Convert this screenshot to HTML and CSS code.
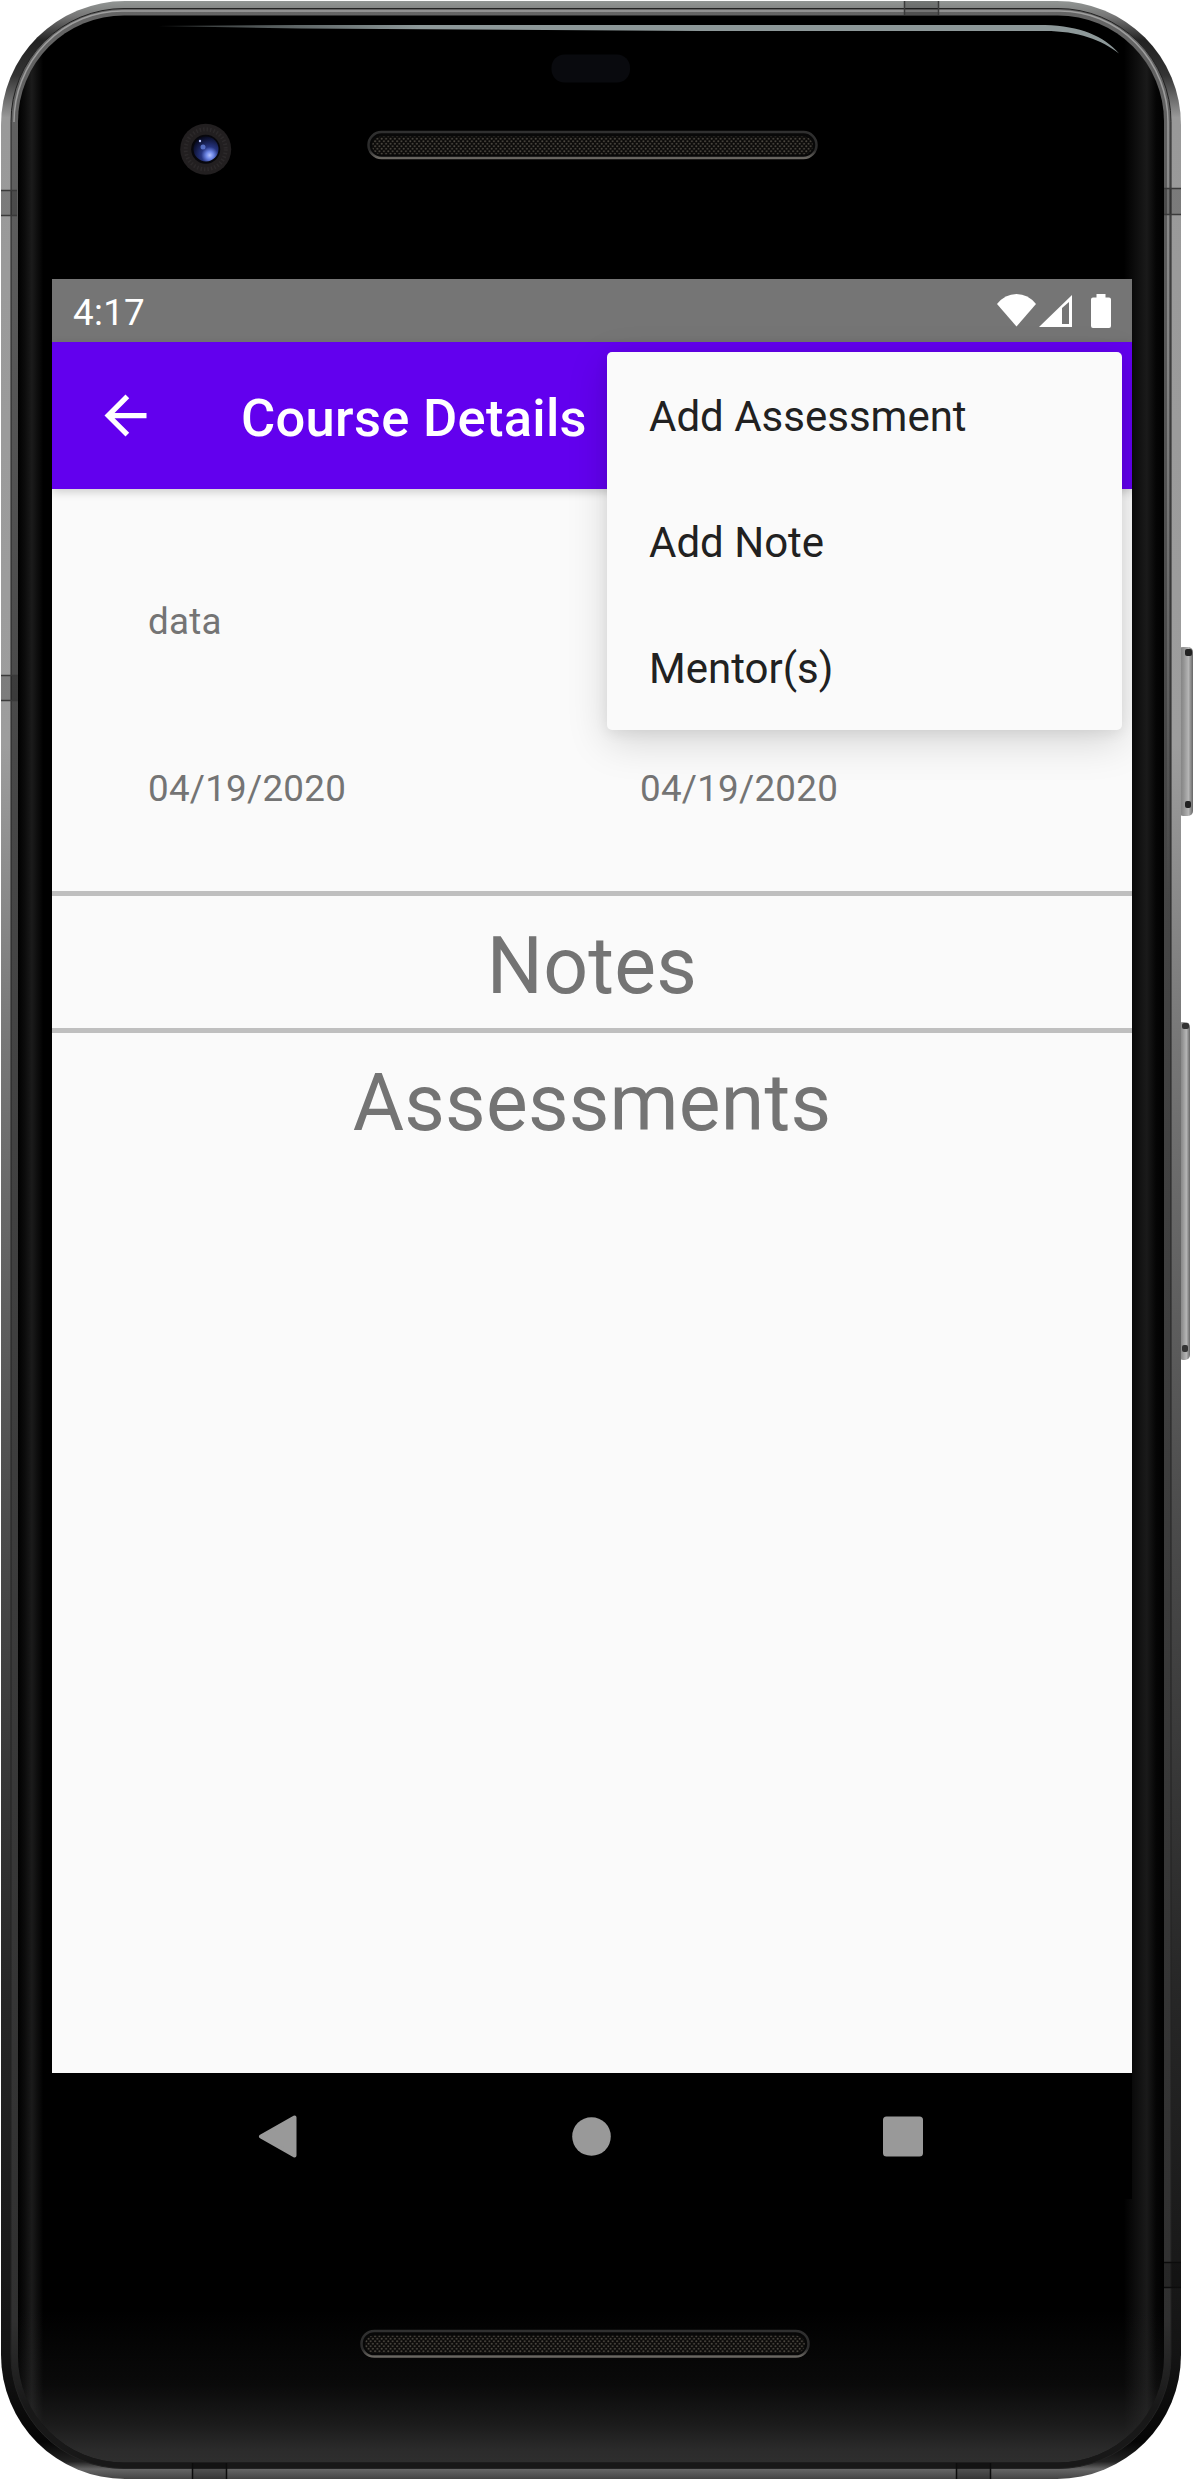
FILE: index.html
```html
<!DOCTYPE html>
<html lang="en">
<head>
<meta charset="utf-8">
<title>Course Details</title>
<link rel="stylesheet" href="styles.css">
</head>
<body>
<div class="device">
  <svg class="casing" viewBox="0 0 1194 2480" aria-hidden="true">
    <defs>
      <linearGradient id="rim" x1="0" y1="0" x2="0" y2="1">
        <stop offset="0" stop-color="#929694"/><stop offset=".006" stop-color="#777"/>
        <stop offset=".016" stop-color="#222"/><stop offset=".03" stop-color="#333"/>
        <stop offset=".047" stop-color="#999"/><stop offset=".3" stop-color="#9d9d9d"/>
        <stop offset=".42" stop-color="#777"/><stop offset=".62" stop-color="#4a4a4a"/>
        <stop offset=".8" stop-color="#272727"/><stop offset=".95" stop-color="#141414"/>
        <stop offset=".985" stop-color="#050505"/><stop offset=".993" stop-color="#222"/><stop offset=".996" stop-color="#666"/><stop offset="1" stop-color="#444"/>
      </linearGradient>
      <linearGradient id="lip" x1="0" y1="0" x2="0" y2="1">
        <stop offset="0" stop-color="#656565"/><stop offset=".3" stop-color="#484848"/>
        <stop offset=".7" stop-color="#393939"/><stop offset=".94" stop-color="#303030"/><stop offset=".975" stop-color="#181818"/><stop offset="1" stop-color="#181818"/>
      </linearGradient>
      <linearGradient id="edge" x1="0" y1="0" x2="0" y2="900" gradientUnits="userSpaceOnUse">
        <stop offset="0" stop-color="#a0a0a0"/><stop offset=".4" stop-color="#909090"/><stop offset="1" stop-color="#909090" stop-opacity="0"/>
      </linearGradient>
      <linearGradient id="sheen" x1="0" y1="0" x2="1" y2="0">
        <stop offset="0" stop-color="#000"/><stop offset=".006" stop-color="#0c0c0c"/><stop offset=".012" stop-color="#1b1b1b"/>
        <stop offset=".022" stop-color="#000"/><stop offset=".965" stop-color="#000"/>
        <stop offset=".985" stop-color="#1a1a1a"/><stop offset=".993" stop-color="#050505"/><stop offset="1" stop-color="#000"/>
      </linearGradient>
      <linearGradient id="chin" x1="0" y1="2310" x2="0" y2="2462" gradientUnits="userSpaceOnUse">
        <stop offset="0" stop-color="#2e2e2e" stop-opacity="0"/><stop offset=".5" stop-color="#2e2e2e" stop-opacity=".22"/>
        <stop offset=".75" stop-color="#2e2e2e" stop-opacity=".58"/><stop offset=".93" stop-color="#2e2e2e" stop-opacity=".95"/><stop offset="1" stop-color="#2e2e2e"/>
      </linearGradient>
      <linearGradient id="glint" x1="158" y1="0" x2="420" y2="0" gradientUnits="userSpaceOnUse">
        <stop offset="0" stop-color="#8d9899" stop-opacity=".3"/><stop offset="1" stop-color="#8d9899"/>
      </linearGradient>
      <linearGradient id="key" x1="0" y1="0" x2="1" y2="0">
        <stop offset="0" stop-color="#777"/><stop offset=".35" stop-color="#909090"/><stop offset=".7" stop-color="#b5b5b5"/><stop offset="1" stop-color="#666"/>
      </linearGradient>
      <radialGradient id="lens" cx=".65" cy=".75" r=".75">
        <stop offset="0" stop-color="#b4c2ff"/><stop offset=".2" stop-color="#6d86e6"/>
        <stop offset=".45" stop-color="#26347f"/><stop offset="1" stop-color="#080b22"/>
      </radialGradient>
      <pattern id="mesh" width="4.4" height="5" patternUnits="userSpaceOnUse">
        <rect width="4.4" height="5" fill="#0c0b0a"/>
        <circle cx="1.1" cy="1.25" r="1" fill="#4a463f"/><circle cx="3.3" cy="3.75" r="1" fill="#4a463f"/>
      </pattern>
      <linearGradient id="slot" x1="0" y1="0" x2="0" y2="1">
        <stop offset="0" stop-color="#303030"/><stop offset=".7" stop-color="#2b2b2b"/><stop offset="1" stop-color="#6a6762"/>
      </linearGradient>
    </defs>

    <!-- side keys -->
    <rect x="1178" y="647" width="15" height="169" rx="5" fill="url(#key)"/>
    <rect x="1185" y="649" width="7" height="7" rx="2" fill="#222"/>
    <rect x="1185" y="801" width="6" height="7" rx="2" fill="#222"/>
    <rect x="1178" y="1022" width="12" height="338" rx="5" fill="url(#key)"/>
    <rect x="1182" y="1023" width="7" height="6" rx="2" fill="#333"/>
    <rect x="1182" y="1345" width="6" height="7" rx="2" fill="#333"/>

    <!-- metal frame -->
    <rect x="1" y="1" width="1180" height="2478" rx="124" fill="url(#rim)"/>
    <rect x="11" y="8.500" width="1160" height="2460" rx="113" fill="url(#lip)" stroke="#222" stroke-width="1"/>
    <path d="M14 122A108 111 0 0 1 122 11H1060A108 111 0 0 1 1168 122V900" fill="none" stroke="url(#edge)" stroke-width="1.500"/>
    <g fill="#000" fill-opacity=".2">
      <path d="M1 190H17V216H1ZM1 675H18V701H1ZM1164 188H1181V215H1164ZM1164 2262H1181V2288H1164ZM904 1H939V15H904ZM192 2463H227V2479H192ZM956 2463H991V2479H956Z"/>
    </g>
    <path d="M1 190.500H17M1 215.500H17M1 675.500H18M1 700.500H18M1164 188.500H1181M1164 214.500H1181M904.500 1V15M938.500 1V15" fill="none" stroke="#3a3a3a" stroke-width="1.500"/>
    <path d="M1164 2262.500H1181M1164 2287.500H1181M192.500 2463V2479M226.500 2463V2479M956.500 2463V2479M990.500 2463V2479" fill="none" stroke="#0c0c0c" stroke-width="1.500"/>

    <!-- front glass -->
    <rect x="18" y="15.500" width="1146" height="2447" rx="106" fill="url(#sheen)"/>
    <rect x="18" y="15.500" width="1146" height="2447" rx="106" fill="url(#chin)"/>
    <path d="M158 26L300 25H1045C1080 26 1104 36 1119 53.500C1102 40 1078 31 1045 31H700L300 28.500Z" fill="url(#glint)"/>

    <!-- camera and proximity sensor -->
    <circle cx="205.700" cy="149.300" r="25.500" fill="#221f20"/>
    <circle cx="205.700" cy="149.300" r="20" fill="none" stroke="#2c292a" stroke-width="4" stroke-dasharray="1.500 2"/>
    <circle cx="205.700" cy="149.300" r="14.500" fill="#07070c"/>
    <circle cx="206" cy="149" r="12.500" fill="url(#lens)"/>
    <circle cx="203" cy="147" r="2.500" fill="#6f8ce8" opacity=".7"/>
    <circle cx="200" cy="141" r="1.200" fill="#b9c4ff"/>
    <rect x="551.500" y="54.500" width="78.500" height="28" rx="13" fill="#090a0e"/>

    <!-- speakers -->
    <rect x="368.500" y="132" width="448" height="26" rx="13" fill="#080808" stroke="url(#slot)" stroke-width="2.500"/>
    <rect x="372" y="136.500" width="441" height="18" rx="9" fill="url(#mesh)"/>
    <rect x="361.500" y="2331" width="447" height="25.500" rx="12.750" fill="#080808" stroke="url(#slot)" stroke-width="2.500"/>
    <rect x="365" y="2335.500" width="440" height="17.500" rx="8.750" fill="url(#mesh)"/>
  </svg>

  <main class="screen">
    <header class="status-bar">
      <span class="clock">4:17</span>
      <svg class="status-icons" viewBox="0 0 114 34" aria-hidden="true">
        <path d="M0 10Q8 0 19.500 0T39 10L19.500 32.500Z"/>
        <path fill-rule="evenodd" d="M42 33L75 1V33ZM65 14V30H72V8Z"/>
        <path d="M99.500 0H108.500V3.500H112Q114 3.500 114 5.500V32Q114 34 112 34H96Q94 34 94 32V5.500Q94 3.500 96 3.500H99.500Z"/>
      </svg>
    </header>
    <div class="app-bar">
      <svg class="back" viewBox="0 0 24 24" aria-label="Back"><path d="M20 11H7.830l5.590-5.590L12 4l-8 8 8 8 1.410-1.410L7.830 13H20v-2z"/></svg>
      <h1 class="title">Course Details</h1>
    </div>
    <section class="content">
      <div class="details">
        <span>data</span><span></span>
        <span>04/19/2020</span><span>04/19/2020</span>
      </div>
      <h2 class="section-title">Notes</h2>
      <h2 class="section-title">Assessments</h2>
    </section>
    <nav class="nav-bar">
      <svg viewBox="0 0 42 43"><path d="M37.500 2.500V40.500L4 21.500Z" stroke="#999" stroke-width="4" stroke-linejoin="round"/></svg>
      <svg viewBox="0 0 42 43"><circle cx="21.500" cy="21.500" r="19.300"/></svg>
      <svg viewBox="0 0 42 43"><rect x="1" y="1.500" width="40" height="40" rx="3.500"/></svg>
    </nav>
    <ul class="menu">
      <li>Add Assessment</li>
      <li>Add Note</li>
      <li>Mentor(s)</li>
    </ul>
  </main>
</div>
</body>
</html>
```

FILE: styles.css
```css
* { box-sizing: border-box; }

body {
  margin: 0;
  background: #fff;
  font-family: Roboto, sans-serif;
}

.device {
  position: relative;
  width: 1194px;
  height: 2480px;
  padding: 279px 62px 0 52px;
}

.casing {
  position: absolute;
  inset: 0;
  width: 1194px;
  height: 2480px;
}

.screen {
  position: relative;
  display: flex;
  flex-direction: column;
  width: 1080px;
  height: 1920px;
  overflow: hidden;
}

.status-bar {
  display: flex;
  justify-content: space-between;
  align-items: center;
  height: 63px;
  padding: 0 21px;
  background: #757575;
  color: #fff;
}

.clock {
  padding-top: 4px;
  font-size: 36.75px;
  line-height: 43px;
  letter-spacing: .3px;
}

.status-icons {
  width: 114px;
  height: 34px;
  fill: #fff;
}

.app-bar {
  z-index: 1;
  display: flex;
  align-items: center;
  height: 147px;
  padding-left: 41.5px;
  background: #6200ee;
  color: #fff;
  box-shadow: 0 3px 9px rgba(0, 0, 0, .18);
}

.back {
  width: 63px;
  height: 63px;
  fill: #fff;
}

.title {
  margin: 0 0 0 84.5px;
  padding-top: 4px;
  font-size: 52.5px;
  line-height: 62px;
  font-weight: 500;
  letter-spacing: .28px;
}

.content {
  height: 1584px;
  background: #fafafa;
  color: #747474;
}

.details {
  display: grid;
  grid-template-columns: 492px 1fr;
  grid-template-rows: 43px 43px;
  row-gap: 124px;
  height: 402px;
  padding: 111px 0 0 96px;
  font-size: 36.75px;
  line-height: 43px;
  letter-spacing: .25px;
}

.section-title {
  height: 137px;
  margin: 0;
  padding-top: 8px;
  border-top: 5px solid #bfbfbf;
  font-size: 78.75px;
  line-height: 124px;
  font-weight: 400;
  letter-spacing: .2px;
  text-align: center;
}

.nav-bar {
  display: flex;
  justify-content: space-between;
  align-items: center;
  height: 126px;
  padding: 0 208px 0 205px;
  background: #000;
}

.nav-bar svg {
  width: 42px;
  height: 43px;
  fill: #999;
}

.menu {
  position: absolute;
  z-index: 2;
  top: 73px;
  right: 10px;
  width: 515px;
  margin: 0;
  padding: 0;
  border-radius: 5px;
  background: #fafafa;
  box-shadow: 0 12px 40px rgba(0, 0, 0, .15), 0 3px 14px rgba(0, 0, 0, .07);
  color: #212121;
  font-size: 42px;
  list-style: none;
}

.menu li {
  height: 126px;
  padding: 3px 42px 0;
  line-height: 123px;
}
```
